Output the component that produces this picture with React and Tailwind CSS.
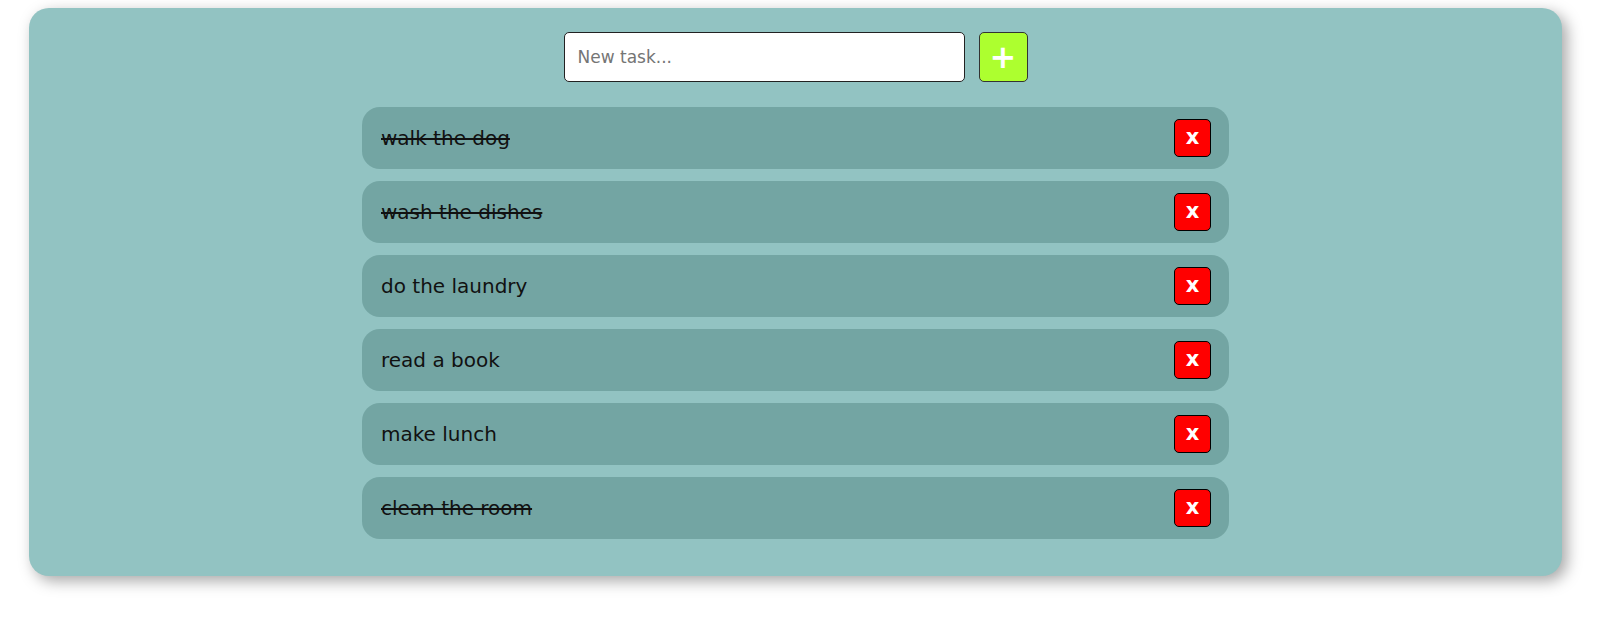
import React, { useState } from 'react';

const initialTasks = [
  { id: 1, text: 'walk the dog', done: true },
  { id: 2, text: 'wash the dishes', done: true },
  { id: 3, text: 'do the laundry', done: false },
  { id: 4, text: 'read a book', done: false },
  { id: 5, text: 'make lunch', done: false },
  { id: 6, text: 'clean the room', done: true },
];

const App = () => {
  const [tasks, setTasks] = useState(initialTasks);
  const [newTask, setNewTask] = useState('');

  const addTask = () => {
    if (!newTask.trim()) return;
    setTasks([...tasks, { id: Date.now(), text: newTask.trim(), done: false }]);
    setNewTask('');
  };

  const toggleTask = (id) =>
    setTasks(tasks.map((t) => (t.id === id ? { ...t, done: !t.done } : t)));

  const removeTask = (id) => setTasks(tasks.filter((t) => t.id !== id));

  return (
    <div className="min-h-screen bg-white pt-[8px] pl-[29px] font-['DejaVu_Sans',_Verdana,_sans-serif]">
      <div className="w-[1533px] rounded-[20px] bg-[#92c3c2] shadow-[5px_5px_15px_rgba(0,0,0,0.35)] pt-[24px] pb-[37px] flex flex-col items-center">
        {/* Input row */}
        <div className="flex gap-[14px]">
          <input
            type="text"
            value={newTask}
            placeholder="New task..."
            onChange={(e) => setNewTask(e.target.value)}
            className="w-[401px] h-[50px] rounded-[5px] border border-[#222] bg-white px-[13px] text-[17px] text-black placeholder:text-[#757575] outline-none"
          />
          <button
            onClick={addTask}
            className="w-[49px] h-[50px] rounded-[5px] border border-[#333] bg-[#adff2f] text-white text-[32px] font-bold leading-none flex items-center justify-center"
          >
            +
          </button>
        </div>

        {/* Task list */}
        <ul className="mt-[25px] flex flex-col gap-[12px]">
          {tasks.map((task) => (
            <li
              key={task.id}
              className="w-[867px] h-[62px] rounded-[18px] bg-[#73a5a3] pl-[19px] pr-[18px] flex items-center justify-between"
            >
              <span
                onClick={() => toggleTask(task.id)}
                className={`text-[20px] text-[#111] cursor-pointer ${task.done ? 'line-through' : ''}`}
              >
                {task.text}
              </span>
              <button
                onClick={() => removeTask(task.id)}
                className="w-[37px] h-[38px] rounded-[5px] border border-black bg-[#ff0000] text-white text-[21px] font-bold leading-none flex items-center justify-center pb-[2px]"
              >
                x
              </button>
            </li>
          ))}
        </ul>
      </div>
    </div>
  );
};

export default App;
